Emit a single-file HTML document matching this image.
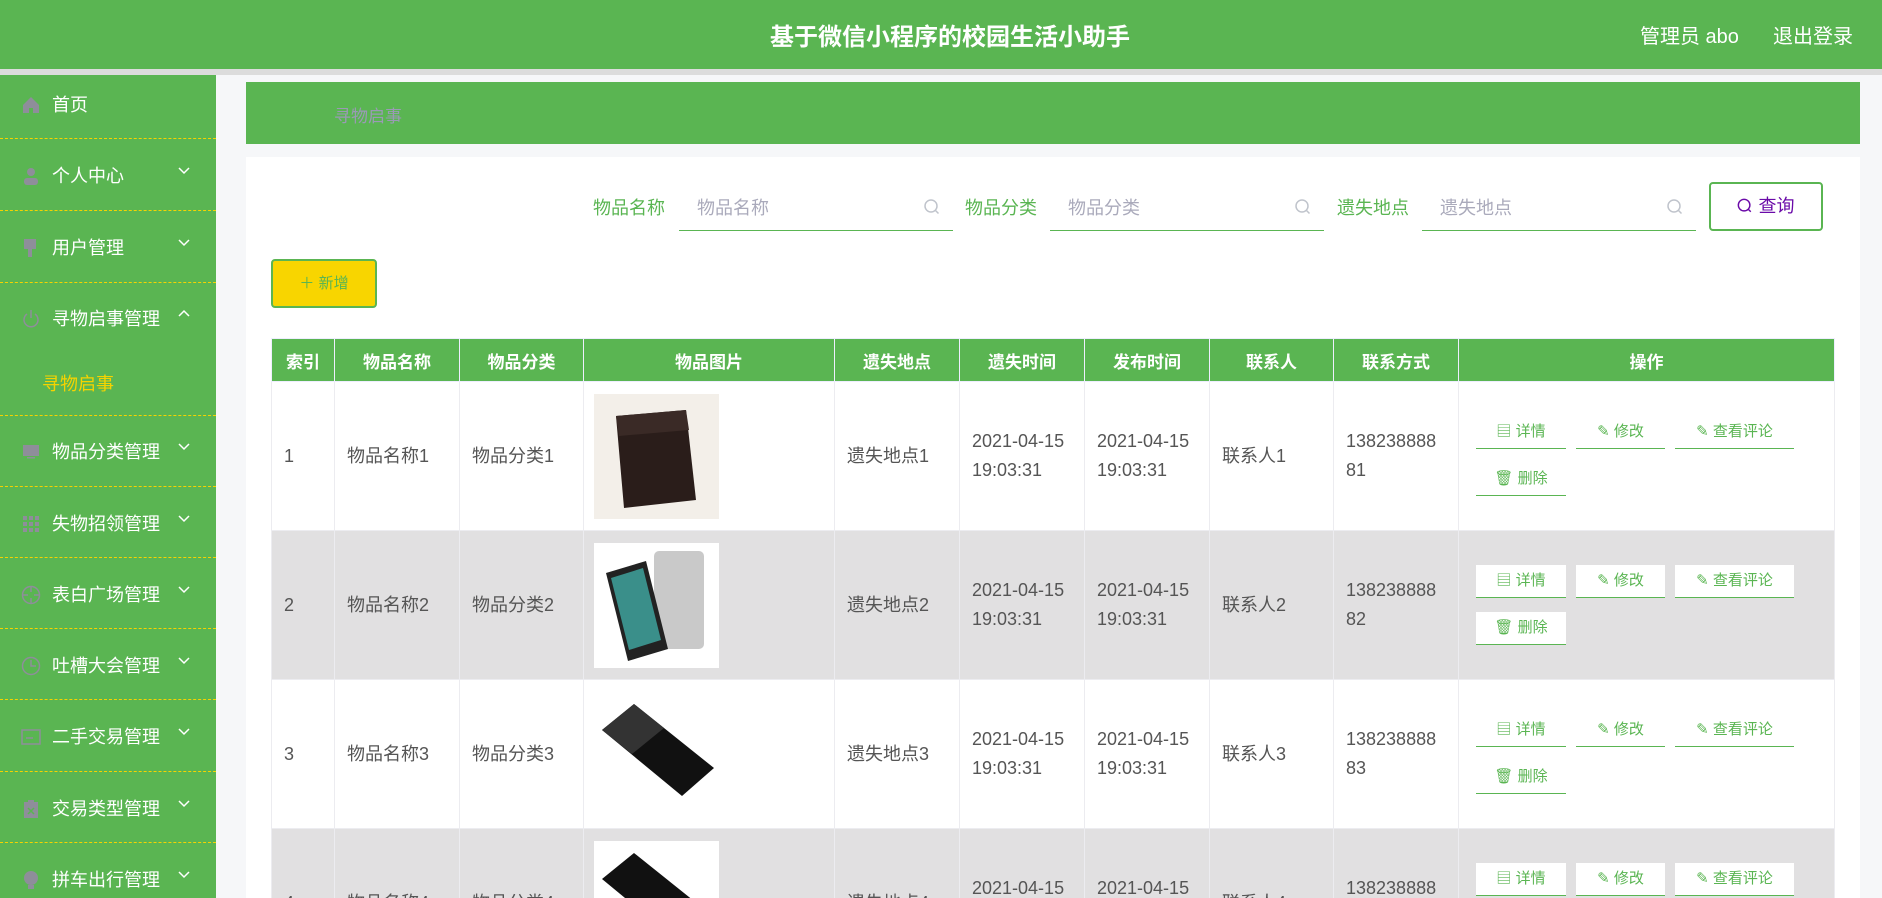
<!DOCTYPE html>
<html><head><meta charset="utf-8"><style>
*{margin:0;padding:0;box-sizing:border-box}
html{width:1882px;height:898px;overflow:hidden}
body{width:1882px;height:898px;overflow:hidden;background:#f6f7f9;font-family:"Liberation Sans","Noto Sans CJK SC",sans-serif;position:relative}
.hdr{position:absolute;left:0;top:0;width:1882px;height:69px;background:#5ab552}
.gb{position:absolute;left:0;top:69px;width:1882px;height:6px;background:#dcdcdc}
.title{position:absolute;left:0;width:1882px;top:17px;text-align:center;color:#fff;font-size:24px;font-weight:bold;padding-left:18px}
.hr{position:absolute;top:20px;color:#fff;font-size:20px}
.side{position:absolute;left:0;top:75px;width:216px;height:823px;background:#5ab552}
.it{position:absolute;left:0;width:216px;color:#fff;font-size:18px;height:24px;line-height:24px}
.it .ic{position:absolute;left:21px;top:2px;width:20px;height:20px}
.it .t{position:absolute;left:52px}
.it .ar{position:absolute;left:177px;top:2px}
.dv{position:absolute;left:0;width:216px;border-top:1.5px dashed #f5d300}
.bc{position:absolute;left:246px;top:82px;width:1614px;height:62px;background:#5ab552}
.bc span{position:absolute;left:88px;top:20px;color:#9a9ab5;font-size:17px}
.card{position:absolute;left:246px;top:157px;width:1614px;height:741px;background:#fff}
.lbl{position:absolute;top:194px;color:#5ab552;font-size:18px}
.inp{position:absolute;top:186px;height:45px;border-bottom:1.5px solid #5ab552;width:274px}
.inp span{position:absolute;left:18px;top:8px;color:#aab;font-size:18px}
.inp svg{position:absolute;right:12px;top:12px}
.q{position:absolute;left:1709px;top:182px;width:114px;height:49px;border:2px solid #5ab552;border-radius:4px;color:#6a0aa8;font-size:18px;text-align:center;line-height:45px}
.add{position:absolute;left:271px;top:259px;width:106px;height:49px;background:#f8d500;border:2px solid #5ab552;border-radius:4px;color:#5ab552;font-size:15px;text-align:center;line-height:45px}
.clip{position:absolute;left:0;top:0;width:1882px;height:898px;overflow:hidden}
table{position:absolute;left:271px;top:338px;border-collapse:collapse;width:1564px}
th{background:#5ab552;color:#fff;font-size:17px;height:43px;border:1px solid #eef;font-weight:bold}
td{border:1px solid #ececf0;height:148px;color:#555;font-size:18px;padding:0 12px;line-height:29px;vertical-align:middle}
tr.g td{background:#e1e0e1}
.ops{position:relative;height:148px}
.b{position:absolute;height:33px;border-bottom:1.5px solid #5ab552;color:#5ab552;font-size:15px;text-align:center;line-height:32px;background:#fff}
tr:not(.g) .b{background:transparent}
.pic{width:125px;height:125px;display:block;margin-left:-2px}
</style></head><body>
<div class="hdr"><div class="title">基于微信小程序的校园生活小助手</div>
<div class="hr" style="left:1640px">管理员 abo</div><div class="hr" style="left:1773px">退出登录</div></div>
<div class="gb"></div>
<div class="side"></div>
<div class="it" style="top:93px"><svg class="ic" viewBox="0 0 20 20"><path d="M10 2L2 10v8h6v-5h4v5h6v-8z" fill="#8e8e9a"/></svg><span class="t">首页</span></div>
<div class="dv" style="top:138px"></div>
<div class="it" style="top:164px"><svg class="ic" viewBox="0 0 20 20"><circle cx="10" cy="6" r="4" fill="#8e8e9a"/><rect x="3" y="12" width="14" height="7" rx="3" fill="#8e8e9a"/></svg><span class="t">个人中心</span><svg class="ar" width="14" height="10" viewBox="0 0 14 10"><path d="M2 2l5 5 5-5" stroke="#fff" fill="none" stroke-width="1.5"/></svg></div>
<div class="dv" style="top:210px"></div>
<div class="it" style="top:236px"><svg class="ic" viewBox="0 0 20 20"><rect x="3" y="1" width="12" height="10" fill="#8e8e9a"/><rect x="7" y="11" width="4" height="8" fill="#8e8e9a"/></svg><span class="t">用户管理</span><svg class="ar" width="14" height="10" viewBox="0 0 14 10"><path d="M2 2l5 5 5-5" stroke="#fff" fill="none" stroke-width="1.5"/></svg></div>
<div class="dv" style="top:282px"></div>
<div class="it" style="top:307px"><svg class="ic" viewBox="0 0 20 20"><path d="M6 5a7 7 0 1 0 8 0M10 1v8" stroke="#8e8e9a" fill="none" stroke-width="1.5"/></svg><span class="t">寻物启事管理</span><svg class="ar" width="14" height="10" viewBox="0 0 14 10"><path d="M2 7l5-5 5 5" stroke="#fff" fill="none" stroke-width="1.5"/></svg></div>
<div class="it" style="top:372px;color:#f5d300"><span class="t" style="left:42px">寻物启事</span></div>
<div class="dv" style="top:415px"></div>
<div class="it" style="top:440px"><svg class="ic" viewBox="0 0 20 20"><rect x="2" y="3" width="16" height="11" fill="#8e8e9a"/><rect x="6" y="15" width="8" height="1.5" fill="#8e8e9a"/></svg><span class="t">物品分类管理</span><svg class="ar" width="14" height="10" viewBox="0 0 14 10"><path d="M2 2l5 5 5-5" stroke="#fff" fill="none" stroke-width="1.5"/></svg></div>
<div class="dv" style="top:486px"></div>
<div class="it" style="top:512px"><svg class="ic" viewBox="0 0 20 20" fill="#8e8e9a"><rect x="2" y="2" width="4" height="4"/><rect x="8" y="2" width="4" height="4"/><rect x="14" y="2" width="4" height="4"/><rect x="2" y="8" width="4" height="4"/><rect x="8" y="8" width="4" height="4"/><rect x="14" y="8" width="4" height="4"/><rect x="2" y="14" width="4" height="4"/><rect x="8" y="14" width="4" height="4"/><rect x="14" y="14" width="4" height="4"/></svg><span class="t">失物招领管理</span><svg class="ar" width="14" height="10" viewBox="0 0 14 10"><path d="M2 2l5 5 5-5" stroke="#fff" fill="none" stroke-width="1.5"/></svg></div>
<div class="dv" style="top:557px"></div>
<div class="it" style="top:583px"><svg class="ic" viewBox="0 0 20 20"><circle cx="10" cy="10" r="8.5" stroke="#8e8e9a" fill="none" stroke-width="1.5"/><path d="M10 1v6M10 13v6M1 10h6M13 10h6" stroke="#8e8e9a" stroke-width="1.5"/></svg><span class="t">表白广场管理</span><svg class="ar" width="14" height="10" viewBox="0 0 14 10"><path d="M2 2l5 5 5-5" stroke="#fff" fill="none" stroke-width="1.5"/></svg></div>
<div class="dv" style="top:628px"></div>
<div class="it" style="top:654px"><svg class="ic" viewBox="0 0 20 20"><circle cx="10" cy="10" r="8.5" stroke="#8e8e9a" fill="none" stroke-width="1.5"/><path d="M10 4v6h5" stroke="#8e8e9a" fill="none" stroke-width="1.5"/></svg><span class="t">吐槽大会管理</span><svg class="ar" width="14" height="10" viewBox="0 0 14 10"><path d="M2 2l5 5 5-5" stroke="#fff" fill="none" stroke-width="1.5"/></svg></div>
<div class="dv" style="top:699px"></div>
<div class="it" style="top:725px"><svg class="ic" viewBox="0 0 20 20"><rect x="1" y="3" width="18" height="14" stroke="#8e8e9a" fill="none" stroke-width="1.5"/><path d="M5 11h7" stroke="#8e8e9a" stroke-width="1.5"/></svg><span class="t">二手交易管理</span><svg class="ar" width="14" height="10" viewBox="0 0 14 10"><path d="M2 2l5 5 5-5" stroke="#fff" fill="none" stroke-width="1.5"/></svg></div>
<div class="dv" style="top:771px"></div>
<div class="it" style="top:797px"><svg class="ic" viewBox="0 0 20 20"><rect x="3" y="3" width="14" height="16" fill="#8e8e9a"/><rect x="7" y="1" width="6" height="3" fill="#8e8e9a"/><path d="M7 9l6 6M13 9l-6 6" stroke="#5ab552" stroke-width="1.5"/></svg><span class="t">交易类型管理</span><svg class="ar" width="14" height="10" viewBox="0 0 14 10"><path d="M2 2l5 5 5-5" stroke="#fff" fill="none" stroke-width="1.5"/></svg></div>
<div class="dv" style="top:842px"></div>
<div class="it" style="top:868px"><svg class="ic" viewBox="0 0 20 20"><circle cx="10" cy="8" r="7" fill="#8e8e9a"/><rect x="7" y="15" width="6" height="4" fill="#8e8e9a"/></svg><span class="t">拼车出行管理</span><svg class="ar" width="14" height="10" viewBox="0 0 14 10"><path d="M2 2l5 5 5-5" stroke="#fff" fill="none" stroke-width="1.5"/></svg></div>

<div class="bc"><span>寻物启事</span></div>
<div class="card"></div>
<div class="lbl" style="left:593px">物品名称</div>
<div class="inp" style="left:679px"><span>物品名称</span><svg width="18" height="18" viewBox="0 0 18 18"><circle cx="8" cy="8" r="6" stroke="#c0c4cc" stroke-width="1.5" fill="none"/><path d="M12.5 12.5l3 3" stroke="#c0c4cc" stroke-width="1.5"/></svg></div>
<div class="lbl" style="left:965px">物品分类</div>
<div class="inp" style="left:1050px"><span>物品分类</span><svg width="18" height="18" viewBox="0 0 18 18"><circle cx="8" cy="8" r="6" stroke="#c0c4cc" stroke-width="1.5" fill="none"/><path d="M12.5 12.5l3 3" stroke="#c0c4cc" stroke-width="1.5"/></svg></div>
<div class="lbl" style="left:1337px">遗失地点</div>
<div class="inp" style="left:1422px"><span>遗失地点</span><svg width="18" height="18" viewBox="0 0 18 18"><circle cx="8" cy="8" r="6" stroke="#c0c4cc" stroke-width="1.5" fill="none"/><path d="M12.5 12.5l3 3" stroke="#c0c4cc" stroke-width="1.5"/></svg></div>
<div class="q"><svg width="16" height="16" viewBox="0 0 18 18" style="vertical-align:-2px"><circle cx="8" cy="8" r="6.5" stroke="#6a0aa8" stroke-width="1.6" fill="none"/><path d="M12.5 12.5l3 3" stroke="#6a0aa8" stroke-width="1.6"/></svg> 查询</div>
<div class="add">＋ 新增</div>

<div class="clip">
<table>
<tr><th style="width:63px">索引</th><th style="width:125px">物品名称</th><th style="width:124px">物品分类</th><th style="width:251px">物品图片</th><th style="width:125px">遗失地点</th><th style="width:125px">遗失时间</th><th style="width:125px">发布时间</th><th style="width:124px">联系人</th><th style="width:125px">联系方式</th><th>操作</th></tr>
<tr><td>1</td><td>物品名称1</td><td>物品分类1</td><td><svg class="pic" viewBox="0 0 125 125"><rect width="125" height="125" fill="#f3efe9"/><path d="M22 22l70-6 10 90-72 8z" fill="#2a1d1a"/><path d="M22 22l70-6 3 20-70 6z" fill="#3a2a26"/></svg></td><td>遗失地点1</td><td>2021-04-15<br>19:03:31</td><td>2021-04-15<br>19:03:31</td><td>联系人1</td><td>138238888<br>81</td><td style="padding:0"><div class="ops"><div class="b" style="left:17px;top:34px;width:90px">▤ 详情</div><div class="b" style="left:117px;top:34px;width:89px">✎ 修改</div><div class="b" style="left:216px;top:34px;width:119px">✎ 查看评论</div><div class="b" style="left:17px;top:81px;width:90px">🗑 删除</div></div></td></tr>
<tr class="g"><td>2</td><td>物品名称2</td><td>物品分类2</td><td><svg class="pic" viewBox="0 0 125 125"><rect width="125" height="125" fill="#fff"/><rect x="60" y="8" width="50" height="98" rx="5" fill="#c9c9c9"/><path d="M12 30l40-12 22 88-40 12z" fill="#222"/><path d="M17 35l32-10 18 72-32 10z" fill="#3a8f8a"/></svg></td><td>遗失地点2</td><td>2021-04-15<br>19:03:31</td><td>2021-04-15<br>19:03:31</td><td>联系人2</td><td>138238888<br>82</td><td style="padding:0"><div class="ops"><div class="b" style="left:17px;top:34px;width:90px">▤ 详情</div><div class="b" style="left:117px;top:34px;width:89px">✎ 修改</div><div class="b" style="left:216px;top:34px;width:119px">✎ 查看评论</div><div class="b" style="left:17px;top:81px;width:90px">🗑 删除</div></div></td></tr>
<tr><td>3</td><td>物品名称3</td><td>物品分类3</td><td><svg class="pic" viewBox="0 0 125 125"><rect width="125" height="125" fill="#fff"/><path d="M8 38l32-26 80 64-32 28z" fill="#111"/><path d="M8 38l32-26 30 24-32 26z" fill="#333"/></svg></td><td>遗失地点3</td><td>2021-04-15<br>19:03:31</td><td>2021-04-15<br>19:03:31</td><td>联系人3</td><td>138238888<br>83</td><td style="padding:0"><div class="ops"><div class="b" style="left:17px;top:34px;width:90px">▤ 详情</div><div class="b" style="left:117px;top:34px;width:89px">✎ 修改</div><div class="b" style="left:216px;top:34px;width:119px">✎ 查看评论</div><div class="b" style="left:17px;top:81px;width:90px">🗑 删除</div></div></td></tr>
<tr class="g"><td>4</td><td>物品名称4</td><td>物品分类4</td><td><svg class="pic" viewBox="0 0 125 125"><rect width="125" height="125" fill="#fff"/><path d="M8 38l32-26 80 64-32 28z" fill="#111"/></svg></td><td>遗失地点4</td><td>2021-04-15<br>19:03:31</td><td>2021-04-15<br>19:03:31</td><td>联系人4</td><td>138238888<br>84</td><td style="padding:0"><div class="ops"><div class="b" style="left:17px;top:34px;width:90px">▤ 详情</div><div class="b" style="left:117px;top:34px;width:89px">✎ 修改</div><div class="b" style="left:216px;top:34px;width:119px">✎ 查看评论</div></div></td></tr>
</table>
</div>
</body></html>
